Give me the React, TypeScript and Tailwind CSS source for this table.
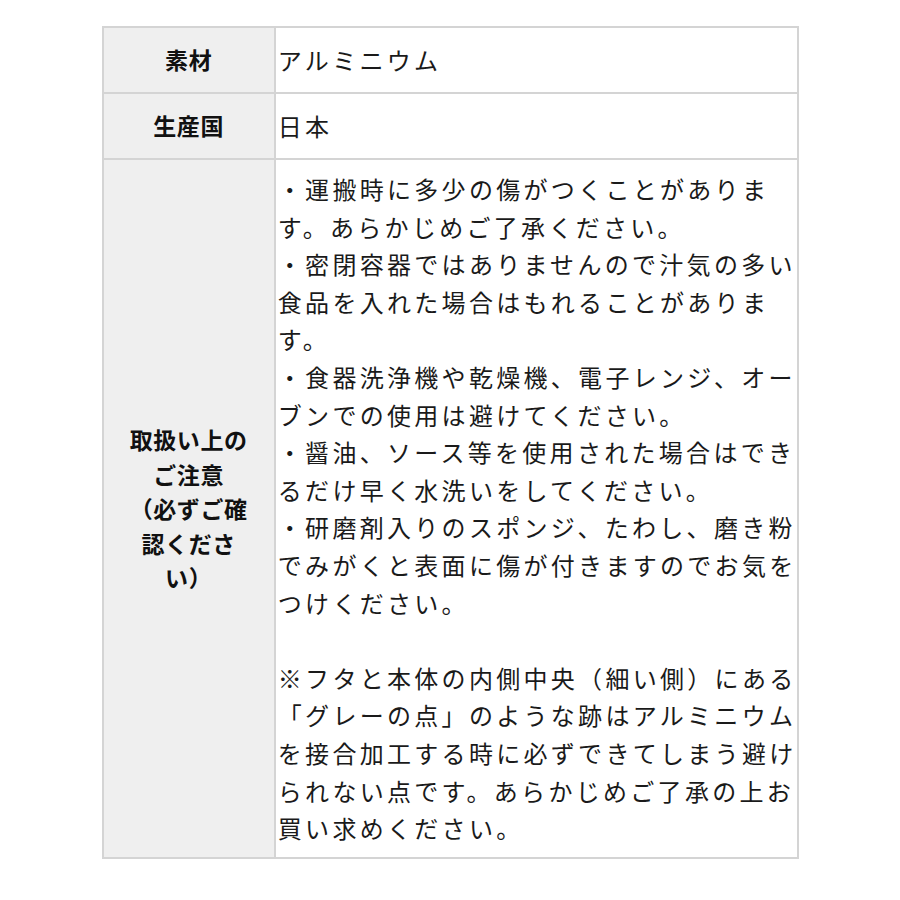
const lines = [
  '・運搬時に多少の傷がつくことがありま',
  'す。あらかじめご了承ください。',
  '・密閉容器ではありませんので汁気の多い',
  '食品を入れた場合はもれることがありま',
  'す。',
  '・食器洗浄機や乾燥機、電子レンジ、オー',
  'ブンでの使用は避けてください。',
  '・醤油、ソース等を使用された場合はでき',
  'るだけ早く水洗いをしてください。',
  '・研磨剤入りのスポンジ、たわし、磨き粉',
  'でみがくと表面に傷が付きますのでお気を',
  'つけください。',
  '',
  '※フタと本体の内側中央（細い側）にある',
  '「グレーの点」のような跡はアルミニウム',
  'を接合加工する時に必ずできてしまう避け',
  'られない点です。あらかじめご了承の上お',
  '買い求めください。',
];

const headLines = ['取扱い上の', 'ご注意', '（必ずご確', '認くださ', 'い）'];

const th =
  'w-[175px] bg-[#efefef] border-2 border-[#d4d4d4] text-center align-middle font-bold text-[23px] tracking-[0.6px] text-[#111]';
const td =
  'border-2 border-[#d4d4d4] bg-white text-left align-middle pl-[2px] pr-0 text-[24px] tracking-[3.3px] leading-[37.6px] text-[#1a1a1a] font-normal';

export default function App() {
  return (
    <div className="min-h-screen bg-white pt-[26px] font-['Noto_Sans_CJK_JP','Noto_Sans_CJK_SC',sans-serif]">
      <table className="mx-auto w-[697px] border-collapse border-2 border-[#cfcfcf]">
        <tbody>
          <tr>
            <th className={`${th} h-[66px] leading-[37.6px]`}>素材</th>
            <td className={`${td} h-[66px]`}>アルミニウム</td>
          </tr>
          <tr>
            <th className={`${th} h-[66px] leading-[37.6px]`}>生産国</th>
            <td className={`${td} h-[66px]`}>日本</td>
          </tr>
          <tr>
            <th className={`${th} leading-[34.5px]`}>
              {headLines.map((l) => (
                <div key={l} className="whitespace-nowrap">
                  {l}
                </div>
              ))}
            </th>
            <td className={`${td} py-[10px]`}>
              {lines.map((l, i) => (
                <div key={i} className="whitespace-nowrap">
                  {l === '' ? '\u00a0' : l}
                </div>
              ))}
            </td>
          </tr>
        </tbody>
      </table>
    </div>
  );
}
